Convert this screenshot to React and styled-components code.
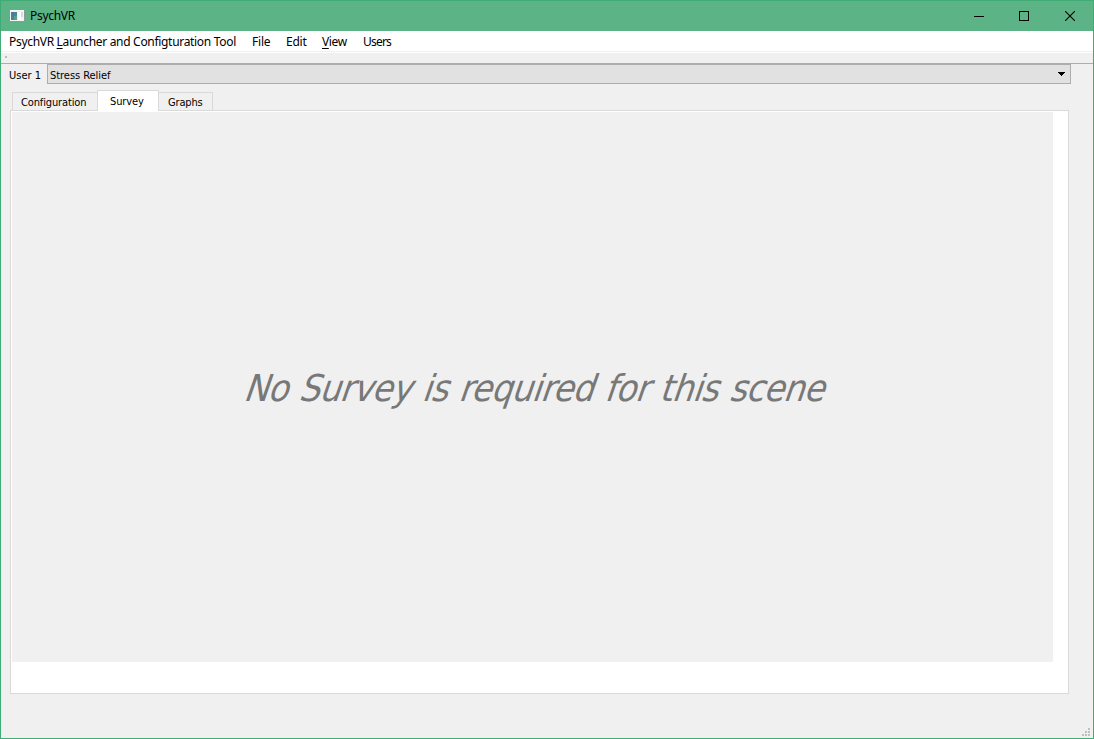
import React from "react";
import styled, { createGlobalStyle } from "styled-components";

const Global = createGlobalStyle`
  * { box-sizing: border-box; }
  body { margin: 0; background: #f0f0f0; overflow: hidden; }
`;

const Window = styled.div`
  position: relative;
  display: flex;
  flex-direction: column;
  width: 1094px;
  height: 739px;
  border: 1px solid #3fac76;
  background: #f0f0f0;
  color: #000;
  font-family: "DejaVu Sans Condensed", "DejaVu Sans", sans-serif;
  font-stretch: condensed;
  font-size: 11px;
  white-space: nowrap;
`;

const TitleBar = styled.header`
  display: flex;
  align-items: center;
  height: 30px;
  padding-left: 8px;
  background: #5cb486;
  font: 12px/16px "Noto Sans", sans-serif;
`;

const Title = styled.span`
  flex: 1;
  margin-left: 5px;
  letter-spacing: ${(p) => p.$spacing}px;
`;

const WindowButton = styled.span`
  display: flex;
  align-items: center;
  justify-content: center;
  width: ${(p) => p.$width}px;
  height: 30px;
`;

const MenuBar = styled.nav`
  display: flex;
  height: 22px;
  padding-left: 8px;
  background: #fff;
  border-bottom: 1px solid #fff;
  box-shadow: inset 0 -1px #f0f0f0;
  font: 12px/22px "Noto Sans", sans-serif;
`;

const MenuItem = styled.span`
  width: ${(p) => p.$width}px;
  letter-spacing: ${(p) => p.$spacing || 0}px;
`;

const Mnemonic = styled.span`
  text-decoration: underline;
  text-decoration-thickness: 1px;
  text-underline-offset: 2px;
  text-decoration-skip-ink: none;
`;

const ToolStrip = styled.div`
  height: 11px;
  padding: 3px 0 0 4px;
  border-bottom: 1px solid #adadad;
`;

const Grip = styled.div`
  width: 2px;
  height: 2px;
  background: #bdbdbd;
`;

const UserRow = styled.div`
  display: flex;
  height: 20px;
  padding-left: 8px;
`;

const UserLabel = styled.span`
  width: 38px;
  line-height: 24px;
  letter-spacing: ${(p) => p.$spacing}px;
`;

const Select = styled.div`
  display: flex;
  align-items: center;
  justify-content: space-between;
  width: 1024px;
  height: 20px;
  padding: 0 5px 0 2px;
  border: 1px solid #adadad;
  background: #e1e1e1;
  line-height: 18px;
  letter-spacing: ${(p) => p.$spacing}px;
`;

const SelectValue = styled.span`
  padding-top: 3px;
`;

const Tabs = styled.div`
  display: flex;
  align-items: flex-end;
  height: 26px;
  padding-left: 11px;
`;

const Tab = styled.div`
  width: ${(p) => p.$width}px;
  height: ${(p) => (p.$active ? 21 : 18)}px;
  margin-bottom: ${(p) => (p.$active ? -1 : 0)}px;
  padding-left: ${(p) => p.$pad}px;
  border: 1px solid #d9d9d9;
  border-bottom: 0;
  border-left-width: ${(p) => (p.$joined ? 0 : 1)}px;
  border-right-width: ${(p) => (p.$open ? 0 : 1)}px;
  background: ${(p) => (p.$active ? "#fff" : "#f0f0f0")};
  line-height: ${(p) => (p.$active ? 22 : 20)}px;
  letter-spacing: ${(p) => p.$spacing}px;
  z-index: ${(p) => (p.$active ? 1 : 0)};
`;

const Pane = styled.main`
  width: 1059px;
  height: 584px;
  margin-left: 9px;
  padding: 1px;
  border: 1px solid #d9d9d9;
  background: #fff;
`;

const Survey = styled.section`
  width: 1041px;
  height: 550px;
  padding: 255px 0 0 230px;
  background: #f0f0f0;
`;

const Message = styled.h1`
  margin: 0;
  color: #787878;
  font-size: 37px;
  font-weight: 400;
  line-height: 44px;
  letter-spacing: ${(p) => p.$spacing}px;
  word-spacing: 1.5px;
  transform: skewX(-19deg);
  transform-origin: 0 36px;
`;

const SizeGrip = styled.svg`
  position: absolute;
  right: 3px;
  bottom: 2px;
`;

const AppIcon = () => (
  <svg width="16" height="14" shapeRendering="crispEdges">
    <rect x="0" y="0" width="16" height="13" fill="#8c9996" />
    <rect x="1" y="1" width="14" height="11" fill="#f3f5f5" />
    <rect x="2" y="3" width="6" height="8" fill="#4b8790" />
    <rect x="2" y="3" width="3" height="5" fill="#477bb0" />
    <rect x="5" y="7" width="3" height="4" fill="#55a087" />
    <rect x="9" y="3" width="3" height="8" fill="#fff" />
    <rect x="12" y="3" width="2" height="5" fill="#d5dadd" />
  </svg>
);

export default function App() {
  return (
    <>
      <Global />
      <Window>
        <TitleBar>
          <AppIcon />
          <Title $spacing={-0.3}>PsychVR</Title>
          <WindowButton $width={45}>
            <svg width="10" height="10" shapeRendering="crispEdges">
              <path d="M0 5.5H10" stroke="#000" />
            </svg>
          </WindowButton>
          <WindowButton $width={46}>
            <svg width="10" height="10" shapeRendering="crispEdges">
              <rect x=".5" y=".5" width="9" height="9" fill="none" stroke="#000" />
            </svg>
          </WindowButton>
          <WindowButton $width={46}>
            <svg width="10" height="10">
              <path d="M0 0L10 10M10 0L0 10" stroke="#000" strokeWidth="1.1" />
            </svg>
          </WindowButton>
        </TitleBar>
        <MenuBar>
          <MenuItem $width={243} $spacing={-0.31}>
            PsychVR <Mnemonic>L</Mnemonic>auncher and Configturation Tool
          </MenuItem>
          <MenuItem $width={34} $spacing={-0.2}>File</MenuItem>
          <MenuItem $width={36} $spacing={-0.25}>Edit</MenuItem>
          <MenuItem $width={41} $spacing={-0.4}>
            <Mnemonic>V</Mnemonic>iew
          </MenuItem>
          <MenuItem $width={40} $spacing={-0.8}>Users</MenuItem>
        </MenuBar>
        <ToolStrip>
          <Grip />
        </ToolStrip>
        <UserRow>
          <UserLabel $spacing={0}>User 1</UserLabel>
          <Select $spacing={-0.05}>
            <SelectValue>Stress Relief</SelectValue>
            <svg width="7" height="4" shapeRendering="crispEdges">
              <path d="M0 0H7V1H6V2H5V3H4V4H3V3H2V2H1V1H0Z" />
            </svg>
          </Select>
        </UserRow>
        <Tabs>
          <Tab $width={85} $pad={8} $spacing={-0.13} $open>
            Configuration
          </Tab>
          <Tab $width={62} $pad={12} $spacing={-0.1} $active>
            Survey
          </Tab>
          <Tab $width={54} $pad={9} $spacing={-0.15} $joined>
            Graphs
          </Tab>
        </Tabs>
        <Pane>
          <Survey>
            <Message $spacing={-0.65}>No Survey is required for this scene</Message>
          </Survey>
        </Pane>
        <SizeGrip width="8" height="8" fill="#bfbfbf" shapeRendering="crispEdges">
          <path d="M6 0h2v2h-2zM3 3h2v2h-2zM6 3h2v2h-2zM0 6h2v2h-2zM3 6h2v2h-2zM6 6h2v2h-2z" />
        </SizeGrip>
      </Window>
    </>
  );
}
